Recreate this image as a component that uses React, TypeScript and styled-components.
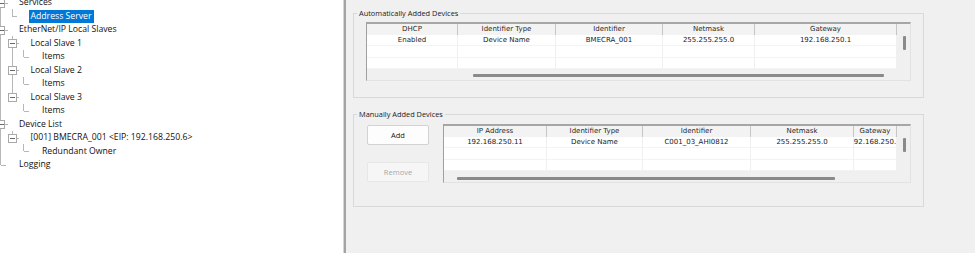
import React from "react";
import styled, { createGlobalStyle } from "styled-components";

const GlobalStyle = createGlobalStyle`
  html, body { margin: 0; padding: 0; background: #f0f0f0; overflow: hidden; }
  #root { width: 975px; height: 253px; }
`;

const ROW_H = 13.5;
const STEP = 11.5;
const X0 = 0.5;

type TreeNode = {
  label: string;
  level: number;
  expander?: boolean;
  last?: boolean;
  cont: boolean[];
  selected?: boolean;
};

const nodes: TreeNode[] = [
  { label: "Services", level: 0, expander: true, cont: [] },
  { label: "Address Server", level: 1, last: true, cont: [true], selected: true },
  { label: "EtherNet/IP Local Slaves", level: 0, expander: true, cont: [] },
  { label: "Local Slave 1", level: 1, expander: true, cont: [true] },
  { label: "Items", level: 2, last: true, cont: [true, true] },
  { label: "Local Slave 2", level: 1, expander: true, cont: [true] },
  { label: "Items", level: 2, last: true, cont: [true, true] },
  { label: "Local Slave 3", level: 1, expander: true, last: true, cont: [true] },
  { label: "Items", level: 2, last: true, cont: [true, false] },
  { label: "Device List", level: 0, expander: true, cont: [] },
  { label: "[001] BMECRA_001 <EIP: 192.168.250.6>", level: 1, expander: true, last: true, cont: [true] },
  { label: "Redundant Owner", level: 2, last: true, cont: [true, false] },
  { label: "Logging", level: 0, last: true, cont: [] },
];

const Window = styled.div`
  display: flex;
  width: 975px;
  height: 253px;
  overflow: hidden;
`;

const TreePane = styled.div`
  width: 343px;
  flex: 0 0 343px;
  background: #ffffff;
  overflow: hidden;
  font-family: "Open Sans", "Noto Sans", sans-serif;
  font-size: 8.7px;
  color: #111111;
`;

const TreeList = styled.div`
  display: flex;
  flex-direction: column;
  margin-top: -4.25px;
`;

const TreeRow = styled.div`
  display: flex;
  align-items: center;
  height: ${ROW_H}px;
  white-space: nowrap;
`;

const GuideSvg = styled.svg`
  flex: 0 0 auto;
  display: block;
  overflow: visible;
  stroke: #b7b7b7;
  stroke-width: 1;
`;

const NodeLabel = styled.span<{ $selected?: boolean }>`
  display: inline-block;
  height: 13px;
  line-height: 13px;
  padding: 0 2px;
  background: ${(p) => (p.$selected ? "#0078d7" : "transparent")};
  color: ${(p) => (p.$selected ? "#ffffff" : "#111111")};
`;

const Splitter = styled.div`
  flex: 0 0 3px;
  box-sizing: border-box;
  border-left: 1px solid #d6d6d6;
  background: #a3a3a3;
`;

const RightPane = styled.div`
  flex: 1;
  background: #f0f0f0;
  padding: 8px 0 0 7px;
  display: flex;
  flex-direction: column;
`;

const Group = styled.fieldset<{ $gap?: number }>`
  width: 571px;
  box-sizing: border-box;
  margin: ${(p) => p.$gap ?? 0}px 0 0 0;
  padding: 0;
  min-width: 0;
  border: 1px solid #d9d9d9;
`;

const GroupTitle = styled.legend`
  margin-left: 3px;
  padding: 0 2px;
  font-family: "Open Sans", "Noto Sans", sans-serif;
  font-size: 7.4px;
  line-height: 10px;
  color: #1a1a1a;
`;

const GroupBody = styled.div<{ $top: number; $left: number; $bottom: number }>`
  display: flex;
  align-items: flex-start;
  gap: 14px;
  padding: ${(p) => p.$top}px 12px ${(p) => p.$bottom}px ${(p) => p.$left}px;
`;

const ButtonColumn = styled.div`
  display: flex;
  flex-direction: column;
  gap: 17px;
  padding-top: 1px;
`;

const PushButton = styled.button<{ $disabled?: boolean }>`
  width: 62px;
  height: 20px;
  box-sizing: border-box;
  margin: 0;
  padding: 0;
  border-radius: 2px;
  border: 1px solid ${(p) => (p.$disabled ? "#e7e7e7" : "#d2d2d2")};
  background: ${(p) => (p.$disabled ? "#f6f6f6" : "#fdfdfd")};
  color: ${(p) => (p.$disabled ? "#a8a8a8" : "#141414")};
  font-family: "Open Sans", "Noto Sans", sans-serif;
  font-size: 7.5px;
`;

const Frame = styled.div<{ $w: number }>`
  width: ${(p) => p.$w}px;
  height: 59px;
  box-sizing: border-box;
  border-top: 2px solid #a6a6a6;
  border-left: 1px solid #a0a0a0;
  border-right: 1px solid #e2e2e2;
  border-bottom: 1px solid #e2e2e2;
  background: #f0f0f0;
  display: grid;
  grid-template-columns: 1fr 13px;
  grid-template-rows: 45px 1fr;
  overflow: hidden;
  font-family: "DejaVu Sans", "Liberation Sans", sans-serif;
  font-size: 7px;
`;

const Grid = styled.div`
  display: flex;
  flex-direction: column;
  overflow: hidden;
`;

const HeaderRow = styled.div`
  display: flex;
  height: 10.5px;
  flex: 0 0 10.5px;
`;

const HeaderCell = styled.div<{ $w: number }>`
  flex: 0 0 ${(p) => p.$w}px;
  box-sizing: border-box;
  border-right: 1px solid #c6c6c6;
  background: #f3f3f3;
  color: #2a2a2a;
  display: flex;
  justify-content: center;
  align-items: center;
  overflow: hidden;
  white-space: nowrap;
`;

const BodyRow = styled.div`
  display: flex;
  height: 11.5px;
  flex: 0 0 11.5px;
`;

const BodyCell = styled.div<{ $w: number }>`
  flex: 0 0 ${(p) => p.$w}px;
  box-sizing: border-box;
  border-right: 1px solid #f0f0f0;
  border-bottom: 1px solid #f3f3f3;
  background: #ffffff;
  color: #1a1a1a;
  display: flex;
  justify-content: center;
  align-items: center;
  overflow: hidden;
  white-space: nowrap;
`;

const VTrack = styled.div`
  display: flex;
  padding: 12px 0 0 6px;
`;

const VThumb = styled.div`
  width: 3px;
  height: 14px;
  background: #8a8a8a;
  border-radius: 1px;
`;

const HTrack = styled.div<{ $top: number }>`
  display: flex;
  padding-top: ${(p) => p.$top}px;
`;

const HThumb = styled.div<{ $left: number; $w: number }>`
  margin-left: ${(p) => p.$left}px;
  width: ${(p) => p.$w}px;
  height: 3px;
  background: #8a8a8a;
  border-radius: 1px;
`;

type Column = { title: string; width: number };

function DataTable({
  width,
  columns,
  rows,
  thumbLeft,
  thumbWidth,
  thumbTop,
}: {
  width: number;
  columns: Column[];
  rows: string[][];
  thumbLeft: number;
  thumbWidth: number;
  thumbTop: number;
}) {
  return (
    <Frame $w={width}>
      <Grid>
        <HeaderRow>
          {columns.map((c) => (
            <HeaderCell key={c.title} $w={c.width}>
              {c.title}
            </HeaderCell>
          ))}
        </HeaderRow>
        {rows.map((r, i) => (
          <BodyRow key={i}>
            {columns.map((c, j) => (
              <BodyCell key={c.title} $w={c.width}>
                {r[j] ?? ""}
              </BodyCell>
            ))}
          </BodyRow>
        ))}
      </Grid>
      <VTrack>
        <VThumb />
      </VTrack>
      <HTrack $top={thumbTop}>
        <HThumb $left={thumbLeft} $w={thumbWidth} />
      </HTrack>
      <div />
    </Frame>
  );
}

function Guides({ node }: { node: TreeNode }) {
  const w = 17 + STEP * node.level;
  const mid = 6.5;
  const x = X0 + STEP * node.level;
  return (
    <GuideSvg width={w} height={ROW_H} viewBox={`0 0 ${w} ${ROW_H}`} shapeRendering="crispEdges">
      {node.cont.map((c, a) =>
        c ? <line key={a} x1={X0 + STEP * a} x2={X0 + STEP * a} y1={0} y2={ROW_H} /> : null
      )}
      {node.expander ? (
        <>
          <line x1={x} x2={x} y1={0} y2={mid - 4} />
          {!node.last && <line x1={x} x2={x} y1={mid + 4} y2={ROW_H} />}
          <line x1={x + 4} x2={x + 7} y1={mid + 0.5} y2={mid + 0.5} />
          <rect x={x - 4} y={mid - 3.5} width={8} height={8} fill="#ffffff" stroke="#a9a9a9" />
          <line x1={x - 2} x2={x + 3} y1={mid + 0.5} y2={mid + 0.5} stroke="#6a6a6a" />
        </>
      ) : (
        <>
          <line x1={x} x2={x} y1={0} y2={node.last ? mid + 0.5 : ROW_H} />
          <line x1={x} x2={x + 5} y1={mid + 0.5} y2={mid + 0.5} />
        </>
      )}
    </GuideSvg>
  );
}

const autoColumns: Column[] = [
  { title: "DHCP", width: 91 },
  { title: "Identifier Type", width: 98 },
  { title: "Identifier", width: 107 },
  { title: "Netmask", width: 92 },
  { title: "Gateway", width: 142 },
];

const manualColumns: Column[] = [
  { title: "IP Address", width: 103 },
  { title: "Identifier Type", width: 96 },
  { title: "Identifier", width: 108 },
  { title: "Netmask", width: 103 },
  { title: "Gateway", width: 43 },
];

export default function App() {
  return (
    <>
      <GlobalStyle />
      <Window>
        <TreePane>
          <TreeList>
            {nodes.map((n, i) => (
              <TreeRow key={i}>
                <Guides node={n} />
                <NodeLabel $selected={n.selected}>{n.label}</NodeLabel>
              </TreeRow>
            ))}
          </TreeList>
        </TreePane>
        <Splitter />
        <RightPane>
          <Group>
            <GroupTitle>Automatically Added Devices</GroupTitle>
            <GroupBody $top={4} $left={12} $bottom={16}>
              <DataTable
                width={545}
                columns={autoColumns}
                rows={[["Enabled", "Device Name", "BMECRA_001", "255.255.255.0", "192.168.250.1"], [], []]}
                thumbLeft={106}
                thumbWidth={411}
                thumbTop={5}
              />
            </GroupBody>
          </Group>
          <Group $gap={11}>
            <GroupTitle>Manually Added Devices</GroupTitle>
            <GroupBody $top={5} $left={13} $bottom={23}>
              <ButtonColumn>
                <PushButton>Add</PushButton>
                <PushButton $disabled>Remove</PushButton>
              </ButtonColumn>
              <DataTable
                width={468}
                columns={manualColumns}
                rows={[["192.168.250.11", "Device Name", "C001_03_AHI0812", "255.255.255.0", "192.168.250.1"], [], []]}
                thumbLeft={13}
                thumbWidth={378}
                thumbTop={6}
              />
            </GroupBody>
          </Group>
        </RightPane>
      </Window>
    </>
  );
}
